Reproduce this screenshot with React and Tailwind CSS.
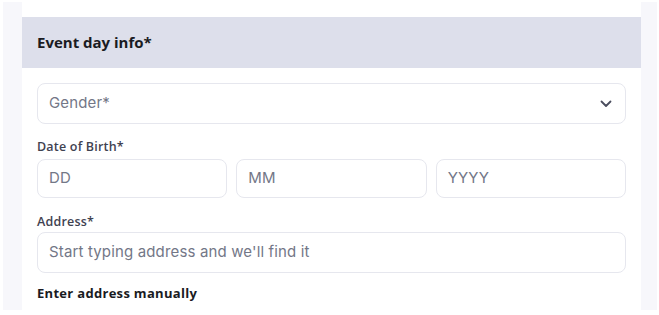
import React from "react";

const font = { fontFamily: '"Open Sans", "Noto Sans", sans-serif' };

function Box({ children, className = "" }) {
  return (
    <div className={"flex items-center rounded-[8px] border border-[#e6e7ee] bg-white px-[11px] font-['Inter',sans-serif] text-[15px] tracking-[0.15px] text-[#737787] " + className}>
      {children}
    </div>
  );
}

export default function App() {
  return (
    <div className="flex h-[315px] w-[659px] bg-white pt-[2px]" style={font}>
      <div className="ml-[3px] h-[308px] w-[19px] bg-[#f7f7fb]" />
      <div className="flex w-[619px] flex-col">
        <div className="mt-[15px] flex h-[51px] items-center bg-[#dddfeb] px-[15px]">
          <span className="text-[15px] font-bold text-[#1a1b22]">Event day info*</span>
        </div>
        <div className="flex flex-col px-[15px]">
          <Box className="mt-[15px] h-[41px] justify-between">
            <span>Gender*</span>
            <svg width="12" height="8" viewBox="0 0 12 8" className="mr-[2px]">
              <path d="M1.5 1.5 L6 6 L10.5 1.5" fill="none" stroke="#4a4d5e" strokeWidth="1.8" strokeLinecap="round" strokeLinejoin="round" />
            </svg>
          </Box>
          <div className="mt-[16px] text-[12.5px] font-semibold leading-[14px] tracking-[0.2px] text-[#3f4251]">Date of Birth*</div>
          <div className="mt-[5px] flex gap-[9px]">
            <Box className="h-[39px] flex-1">DD</Box>
            <Box className="h-[39px] flex-1">MM</Box>
            <Box className="h-[39px] flex-1">YYYY</Box>
          </div>
          <div className="mt-[17px] text-[12.5px] font-semibold leading-[14px] tracking-[0.2px] text-[#3f4251]">Address*</div>
          <Box className="mt-[3px] h-[41px]">Start typing address and we'll find it</Box>
          <div className="mt-[11px] text-[13px] font-bold tracking-[0.3px] text-[#1a1b22]">Enter address manually</div>
        </div>
      </div>
      <div className="h-[308px] w-[16px] bg-[#f7f7fb]" />
    </div>
  );
}
